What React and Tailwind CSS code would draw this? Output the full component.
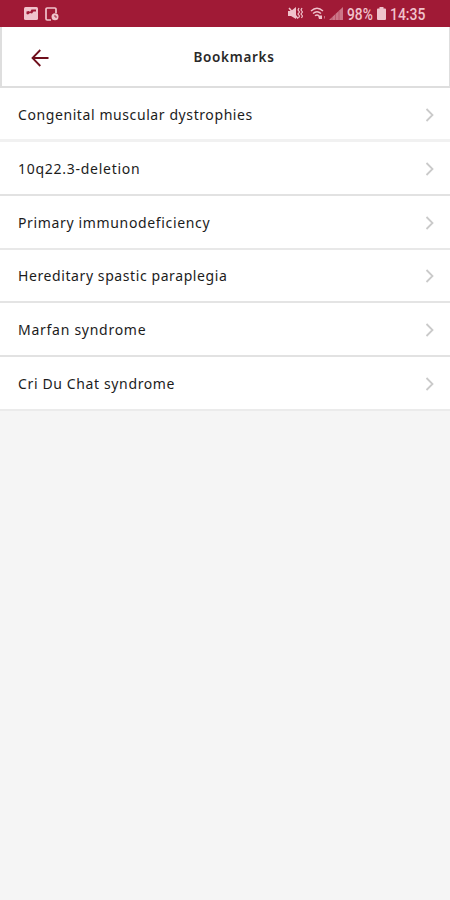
const bookmarks = [
  { title: 'Congenital muscular dystrophies', row: 'h-[54px] border-b-[3px] border-[#f1f1f1] pt-[3px]', text: 'pb-px tracking-[0.59px]' },
  { title: '10q22.3-deletion', row: 'h-[54px] border-b-2 border-[#e2e2e2] pt-[2px]', text: 'pb-px tracking-[0.73px]' },
  { title: 'Primary immunodeficiency', row: 'h-[54px] border-b-2 border-[#e8e8e8] pt-px', text: 'tracking-[0.65px]' },
  { title: 'Hereditary spastic paraplegia', row: 'h-[53px] border-b-2 border-[#e4e4e4] pt-px', text: 'pb-px tracking-[0.59px]' },
  { title: 'Marfan syndrome', row: 'h-[54px] border-b-2 border-[#e2e2e2] pt-px', text: 'tracking-[0.73px]' },
  { title: 'Cri Du Chat syndrome', row: 'h-[54px] border-b-2 border-[#ebebeb] pt-px', text: 'tracking-[0.63px]' }
];

function StatusBar() {
  return (
    <div className="flex h-[27px] items-center justify-between bg-[#a01a36] pl-6 pr-[24px] text-[#f0c3cc]">
      <div className="flex items-center gap-[7px]">
        <svg width="14" height="13" viewBox="0 0 14 13">
          <rect width="14" height="13" rx="1.5" fill="currentColor" />
          <path d="M2.500 7V4.500l2.500-.5 1 1 1.500-2.500H12v2H9.500L8 6.500 6 6 4 7.500z" fill="#a01a36" />
        </svg>
        <svg width="14" height="14" viewBox="0 0 14 14" fill="none">
          <path d="M11 6V2.200Q11 1 9.800 1H2.200Q1 1 1 2.200V11.800Q1 13 2.200 13H6" stroke="currentColor" strokeWidth="1.700" />
          <circle cx="10" cy="9.800" r="3.500" fill="currentColor" />
          <path d="M10 8v2h2" stroke="#a01a36" strokeWidth="0.900" />
        </svg>
      </div>

      <div className="flex items-center">
        {/* Vibrate / muted */}
        <svg width="15" height="13" viewBox="0 0 15 13" fill="none">
          <path d="M0 4h3l5-4v12L3 9H0z" fill="currentColor" />
          <path d="M1 1l9 10.500" stroke="currentColor" strokeWidth="1.500" />
          <path d="M11 1l-1 2 1.500 2-1.500 2 1.500 2-1 2M14 1l-1 2 1.500 2-1.500 2 1.500 2-1 2" stroke="currentColor" strokeWidth="1.200" />
        </svg>
        {/* Wifi */}
        <svg className="ml-[7px]" width="16" height="13" viewBox="0 0 16 13" fill="none">
          <path d="M1 4Q7-1.500 13 4M3 6.500Q7 3 11 6.500M5 8.800Q7 7.200 9 8.800" stroke="currentColor" strokeWidth="1.400" />
          <path d="M8 8.500h4v3.500H9z" fill="currentColor" />
          <path d="M14.500 11.500V9" stroke="currentColor" strokeWidth="1" opacity="0.500" />
        </svg>
        {/* Signal */}
        <svg className="ml-[3px]" width="14" height="13" viewBox="0 0 14 13">
          <path d="M0 13L14 0V13z" fill="currentColor" opacity="0.550" />
          <path d="M3 13v-3M6.500 13V7M10 13V4" stroke="#a01a36" strokeWidth="0.700" opacity="0.500" />
        </svg>
        <span className="ml-[4px] w-[26px] origin-left scale-x-[0.86] whitespace-nowrap pt-[2px] font-['Roboto',sans-serif] text-[16px] font-medium leading-none">98%</span>
        <svg className="ml-[4px]" width="9" height="13" viewBox="0 0 9 13">
          <path d="M2.500 0h4v1.500H8q1 0 1 1V12q0 1-1 1H1q-1 0-1-1V2.500q0-1 1-1h1.500z" fill="currentColor" />
        </svg>
        <span className="ml-[4px] w-[36px] origin-left scale-x-[0.87] whitespace-nowrap pt-[2px] font-['Roboto',sans-serif] text-[16px] font-medium leading-none">14:35</span>
      </div>
    </div>
  );
}

export default function App() {
  return (
    <div className="min-h-[900px] w-[450px] bg-[#f5f5f5] font-['Noto_Sans',sans-serif]">
      <StatusBar />

      {/* Header */}
      <header className="grid h-[61px] grid-cols-[1fr_auto_1fr] items-center border-b-2 border-l-2 border-r border-[#dedede] bg-white">
        <button className="ml-[29px] mt-[2px] w-[18px]">
          <svg width="18" height="18" viewBox="0 0 18 18" fill="none" stroke="#6f0f1c" strokeWidth="1.800">
            <path d="M17.500 9H1.500M9.300 1L1.500 9l7.800 8" />
          </svg>
        </button>
        <h1 className="pl-[17px] pt-[2px] text-[13.500px] font-semibold tracking-[0.700px] text-[#292929]">Bookmarks</h1>
      </header>

      {/* Bookmarks */}
      <ul>
        {bookmarks.map((item) => (
          <li
            key={item.title}
            className={`flex items-center justify-between bg-white pl-[18px] pr-4 ${item.row}`}
          >
            <span className={`whitespace-nowrap text-[14px] text-[#1c1c1c] ${item.text}`}>{item.title}</span>
            <svg width="9" height="14" viewBox="0 0 9 14" fill="none" stroke="#cacaca" strokeWidth="1.800">
              <path d="M1.500 1l6 6-6 6" />
            </svg>
          </li>
        ))}
      </ul>
    </div>
  );
}
